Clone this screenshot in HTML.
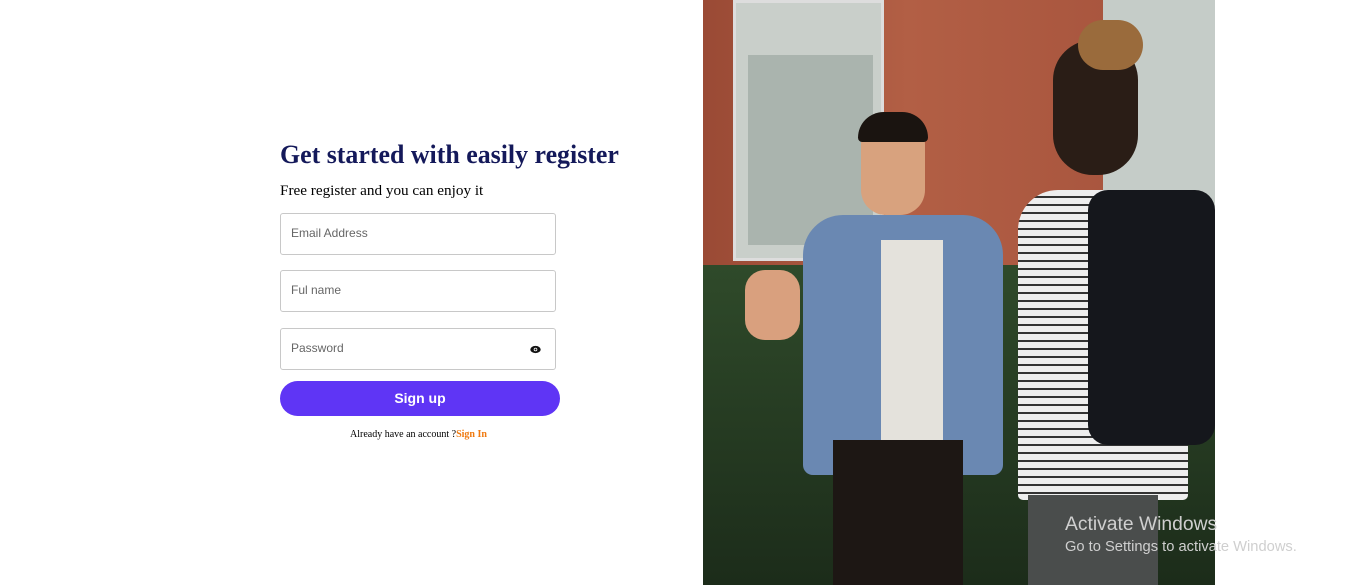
<!DOCTYPE html>
<html><head><style>
body{margin:0;width:1358px;height:585px;background:#fff;position:relative;overflow:hidden;font-family:"Liberation Serif",serif}
.a{position:absolute}
h1{position:absolute;left:280px;top:140px;margin:0;font-size:25.9px;color:#14195a;font-weight:bold;white-space:nowrap}
.sub{left:280px;top:182px;font-size:15.2px;color:#000}
.in{position:absolute;left:280px;width:274px;height:40px;border:1px solid #c8c8c8;border-radius:3px;font-family:"Liberation Sans",sans-serif;font-size:12px;color:#666;box-sizing:content-box}
.in span{position:absolute;left:10px;top:12px}
.btn{left:280px;top:381px;width:280px;height:35px;border-radius:18px;background:#5f35f5;color:#fff;font:bold 14px "Liberation Sans",sans-serif;text-align:center;line-height:35px}
</style></head><body>
<h1>Get started with easily register</h1>
<div class="a sub">Free register and you can enjoy it</div>
<div class="in" style="top:213px"><span>Email Address</span></div>
<div class="in" style="top:270px"><span>Ful name</span></div>
<div class="in" style="top:328px"><span>Password</span>
<svg class="a" style="left:249px;top:16px" width="11" height="9" viewBox="0 0 11 9"><ellipse cx="5.5" cy="4.5" rx="5.2" ry="3.6" fill="#111"/><circle cx="5.5" cy="4.5" r="1.8" fill="#fff"/><circle cx="5.5" cy="4.5" r="1" fill="#111"/></svg></div>
<div class="a btn">Sign up</div>
<div class="a" style="left:350px;top:429px;font-size:10px;color:#000">Already have an account ?<b style="color:#f07a10">Sign In</b></div>

<div class="a" style="left:703px;top:0;width:512px;height:585px;overflow:hidden;background:#a4523a">
 <div class="a" style="left:0;top:0;width:512px;height:280px;background:linear-gradient(90deg,#9a4a35,#b25f45 40%,#a4513b)"></div>
 <div class="a" style="left:30px;top:0;width:145px;height:255px;background:#c9cfca;border:3px solid #ddd"></div>
 <div class="a" style="left:45px;top:55px;width:125px;height:190px;background:#aab4ae"></div>
 <div class="a" style="left:400px;top:0;width:112px;height:210px;background:#c5ccc8"></div>
 <div class="a" style="left:0;top:265px;width:512px;height:320px;background:linear-gradient(180deg,#2f4a2a,#1c2c1a)"></div>
 <div class="a" style="left:100px;top:215px;width:200px;height:260px;background:#6a88b2;border-radius:40px 40px 10px 10px"></div>
 <div class="a" style="left:178px;top:240px;width:62px;height:200px;background:#e4e2dc"></div>
 <div class="a" style="left:130px;top:440px;width:130px;height:145px;background:#1d1714"></div>
 <div class="a" style="left:158px;top:115px;width:64px;height:100px;background:#d8a27e;border-radius:30px 30px 25px 25px"></div>
 <div class="a" style="left:155px;top:112px;width:70px;height:30px;background:#1a1410;border-radius:30px 30px 5px 5px"></div>
 <div class="a" style="left:42px;top:270px;width:55px;height:70px;background:#d9a07e;border-radius:20px"></div>
 <div class="a" style="left:315px;top:190px;width:170px;height:310px;background:repeating-linear-gradient(180deg,#eee 0 6px,#333 6px 8px);border-radius:40px 40px 5px 5px"></div>
 <div class="a" style="left:385px;top:190px;width:127px;height:255px;background:#15171c;border-radius:20px"></div>
 <div class="a" style="left:350px;top:40px;width:85px;height:135px;background:#2a1d16;border-radius:40px"></div>
 <div class="a" style="left:375px;top:20px;width:65px;height:50px;background:#9a6b3c;border-radius:30px"></div>
 <div class="a" style="left:325px;top:495px;width:130px;height:90px;background:#4a4d4c"></div>
</div>
<div class="a" style="left:1065px;top:514px;font:19.3px 'Liberation Sans',sans-serif;color:#cfcfcf">Activate Windows</div>
<div class="a" style="left:1065px;top:539px;font:14.7px 'Liberation Sans',sans-serif;color:#cfcfcf">Go to Settings to activate Windows.</div>
</body></html>
